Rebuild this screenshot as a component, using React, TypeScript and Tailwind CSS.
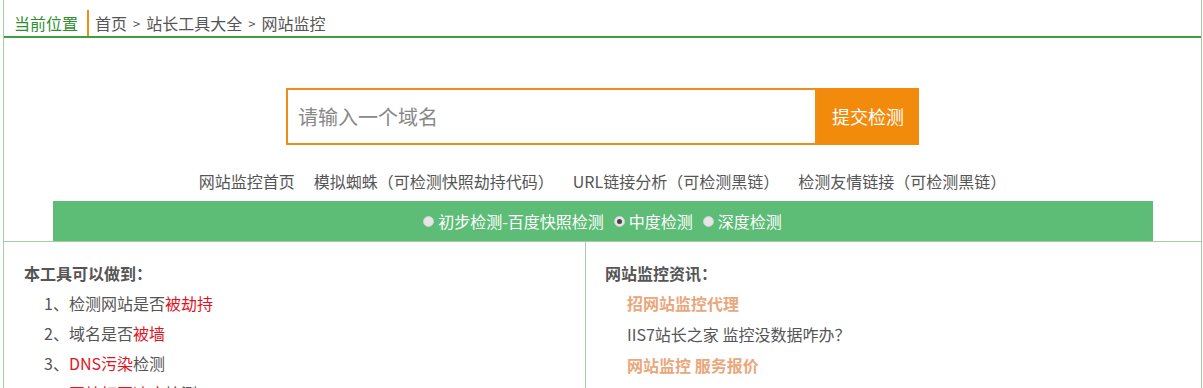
import React, { useState } from 'react';

const FONT = "font-['Noto_Sans_CJK_SC','Liberation_Sans',sans-serif]";

const links = [
  '网站监控首页',
  '模拟蜘蛛（可检测快照劫持代码）',
  'URL链接分析（可检测黑链）',
  '检测友情链接（可检测黑链）',
];

const modes = ['初步检测-百度快照检测', '中度检测', '深度检测'];

function Radio({ checked }: { checked: boolean }) {
  return (
    <span className="w-[11px] h-[11px] rounded-full bg-[#e6e6e6] border border-[#cfcfcf] flex items-center justify-center">
      {checked && <span className="w-[5px] h-[5px] rounded-full bg-[#444]" />}
    </span>
  );
}

export default function App() {
  const [mode, setMode] = useState(1);
  const [domain, setDomain] = useState('');

  return (
    <div className={`${FONT} bg-white w-[1203px] h-[388px] overflow-hidden`}>
      <div className="ml-[3px] w-[1199px] border-l border-r border-[#a3cda3] min-h-[388px]">
        {/* breadcrumb */}
        <div className="h-[38px] flex items-end border-b-2 border-[#3f9f3f]">
          <div className="h-[26px] flex items-center pl-[10px] pr-[9px] border-r-2 border-[#f08c1a] text-[16px] text-[#2f8f2f] leading-none">
            当前位置
          </div>
          <div className="h-[26px] flex items-center pl-[6px] text-[16px] text-[#555] leading-none">
            首页<span className="mx-[6px] text-[13px]">&gt;</span>站长工具大全
            <span className="mx-[6px] text-[13px]">&gt;</span>网站监控
          </div>
        </div>

        {/* search */}
        <div className="flex justify-center mt-[50px]">
          <input
            value={domain}
            onChange={(e) => setDomain(e.target.value)}
            placeholder="请输入一个域名"
            className="w-[531px] h-[57px] border-2 border-[#f08c1a] px-[10px] text-[20px] text-[#555] placeholder:text-[#888] outline-none"
          />
          <button className="w-[102px] h-[57px] bg-[#f28a0c] text-white text-[18px]">提交检测</button>
        </div>

        {/* links */}
        <div className="flex justify-center gap-[19px] mt-[24px] h-[24px] items-center text-[16px] text-[#555]">
          {links.map((l) => (
            <span key={l}>{l}</span>
          ))}
        </div>

        {/* mode bar */}
        <div className="mx-auto w-[1100px] h-[40px] mt-[8px] bg-[#5dbd76] flex items-center justify-center gap-[10px] text-[16px] text-white">
          {modes.map((m, i) => (
            <label key={m} className="flex items-center gap-[4px] cursor-pointer" onClick={() => setMode(i)}>
              <Radio checked={mode === i} />
              {m}
            </label>
          ))}
        </div>

        {/* info box */}
        <div className="border-t border-[#a3cda3] grid grid-cols-[582px_1fr]">
          <div className="border-r border-[#a3cda3] pl-[20px] pt-[20px] text-[16px] text-[#555]">
            <h3 className="font-bold text-[16px] leading-[22px]">本工具可以做到：</h3>
            <ul className="pl-[20px] mt-[8px] space-y-[8px] leading-[22px]">
              <li>
                1、检测网站是否<span className="text-[#e0141e]">被劫持</span>
              </li>
              <li>
                2、域名是否<span className="text-[#e0141e]">被墙</span>
              </li>
              <li>
                3、<span className="text-[#e0141e]">DNS污染</span>检测
              </li>
              <li>
                4、<span className="text-[#e0141e]">网站打开速度</span>检测
              </li>
            </ul>
          </div>
          <div className="pl-[19px] pt-[20px] text-[16px] text-[#555]">
            <h3 className="font-bold text-[16px] leading-[22px]">网站监控资讯：</h3>
            <ul className="pl-[22px] mt-[8px] space-y-[8px] leading-[23px]">
              <li className="font-bold text-[#e9a77c]">招网站监控代理</li>
              <li>IIS7站长之家 监控没数据咋办？</li>
              <li className="font-bold text-[#e9a77c]">网站监控 服务报价</li>
            </ul>
          </div>
        </div>
      </div>
    </div>
  );
}
